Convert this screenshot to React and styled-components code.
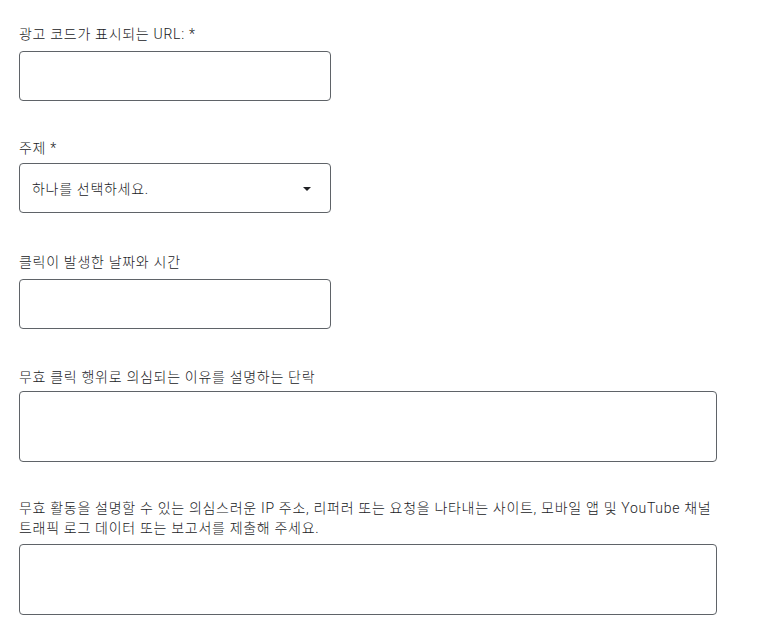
import React from 'react';
import styled, { createGlobalStyle } from 'styled-components';

const GlobalStyle = createGlobalStyle`
    body {
        margin: 0;
        background: #fff;
        font-family: Roboto, "Noto Sans CJK KR", "Noto Sans", sans-serif;
        color: #202124;
    }
`;

const Style = {
    Form: styled.form`
        display: flex;
        flex-direction: column;
        padding: 24px 19px 0 19px;
    `,
    Field: styled.div`
        display: flex;
        flex-direction: column;
        margin-bottom: ${(p) => p.$space ?? 38}px;
    `,
    Label: styled.label`
        font-size: 14px;
        line-height: 20px;
        letter-spacing: 0.7px;
        font-weight: 300;
        color: #202124;
        margin-bottom: ${(p) => p.$gap || 6}px;
    `,
    Input: styled.input`
        box-sizing: border-box;
        width: 312px;
        height: 50px;
        border: 1px solid #5f6368;
        border-radius: 4px;
        padding: 0 12px;
        font-family: inherit;
        font-size: 14px;
        outline: none;
    `,
    SelectBox: styled.div`
        box-sizing: border-box;
        width: 312px;
        height: 50px;
        border: 1px solid #5f6368;
        border-radius: 4px;
        padding: 0 19px 0 12px;
        display: flex;
        align-items: center;
        justify-content: space-between;
        font-size: 14px;
        font-weight: 300;
        letter-spacing: 0.7px;
        color: #202124;
    `,
    Arrow: styled.span`
        width: 0;
        height: 0;
        border-left: 4px solid transparent;
        border-right: 4px solid transparent;
        border-top: 4px solid #202124;
        margin-top: 1px;
    `,
    TextArea: styled.textarea`
        box-sizing: border-box;
        width: 698px;
        height: 71px;
        border: 1px solid #5f6368;
        border-radius: 4px;
        padding: 12px;
        font-family: inherit;
        font-size: 14px;
        resize: none;
        outline: none;
    `,
};

const App = () => {
    return (
        <>
            <GlobalStyle />
            <Style.Form>
                <Style.Field $space={37}>
                    <Style.Label $gap={7}>광고 코드가 표시되는 URL: *</Style.Label>
                    <Style.Input type="text" />
                </Style.Field>
                <Style.Field $space={39}>
                    <Style.Label $gap={5}>주제 *</Style.Label>
                    <Style.SelectBox>
                        <span>하나를 선택하세요.</span>
                        <Style.Arrow />
                    </Style.SelectBox>
                </Style.Field>
                <Style.Field $space={38}>
                    <Style.Label $gap={7}>클릭이 발생한 날짜와 시간</Style.Label>
                    <Style.Input type="text" />
                </Style.Field>
                <Style.Field $space={36}>
                    <Style.Label $gap={4}>무효 클릭 행위로 의심되는 이유를 설명하는 단락</Style.Label>
                    <Style.TextArea />
                </Style.Field>
                <Style.Field $space={0}>
                    <Style.Label $gap={6}>
                        무효 활동을 설명할 수 있는 의심스러운 IP 주소, 리퍼러 또는 요청을 나타내는 사이트, 모바일 앱 및 YouTube 채널
                        <br />
                        트래픽 로그 데이터 또는 보고서를 제출해 주세요.
                    </Style.Label>
                    <Style.TextArea />
                </Style.Field>
            </Style.Form>
        </>
    );
};

export default App;
